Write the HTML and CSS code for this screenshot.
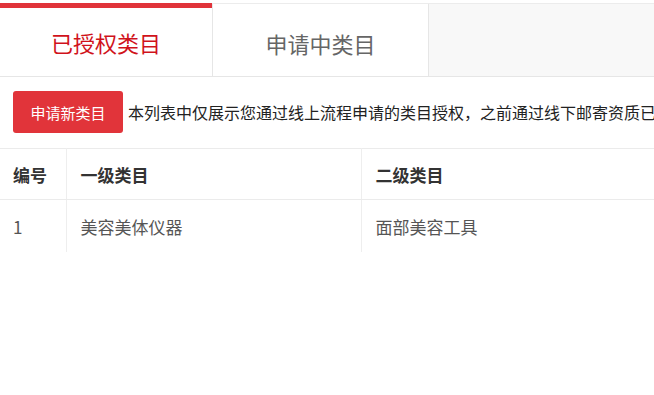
FILE: index.html
```html
<!DOCTYPE html>
<html lang="zh">
<head>
<meta charset="utf-8">
<link rel="stylesheet" href="styles.css">
</head>
<body>
<div class="page">
  <div class="tabs">
    <div class="tab tab-active">已授权类目</div>
    <div class="tab tab-normal">申请中类目</div>
  </div>
  <div class="toolbar">
    <button class="btn-apply">申请新类目</button>
    <span class="note">本列表中仅展示您通过线上流程申请的类目授权，之前通过线下邮寄资质已经获得授权的类目不在此列表中展示</span>
  </div>
  <table class="grid">
    <colgroup>
      <col class="c1"><col class="c2"><col class="c3">
    </colgroup>
    <thead>
      <tr><th>编号</th><th>一级类目</th><th>二级类目</th></tr>
    </thead>
    <tbody>
      <tr><td>1</td><td>美容美体仪器</td><td>面部美容工具</td></tr>
    </tbody>
  </table>
</div>
</body>
</html>
```

FILE: styles.css
```css
html, body {
  margin: 0;
  padding: 0;
  background: #fff;
}
body {
  font-family: "Noto Sans CJK SC", "Noto Sans", sans-serif;
  overflow: hidden;
}
.page {
  width: 654px;
  padding-top: 3px;
}
.tabs {
  display: flex;
  height: 74px;
  box-sizing: border-box;
  border-top: 1px solid #ececec;
  border-bottom: 1px solid #e6e6e6;
  background: #f8f8f8;
}
.tab {
  display: flex;
  align-items: center;
  justify-content: center;
  font-size: 22px;
  background: #fff;
  box-sizing: border-box;
}
.tab-active {
  width: 212px;
  margin-top: -1px;
  border-top: 5px solid #e0333a;
  color: #d0121b;
  padding-bottom: 1px;
}
.tab-normal {
  width: 217px;
  border-left: 1px solid #e6e6e6;
  border-right: 1px solid #e6e6e6;
  color: #666;
  padding-top: 6px;
}
.toolbar {
  display: flex;
  align-items: center;
  padding: 14px 0 15px 13px;
  white-space: nowrap;
  overflow: hidden;
}
.btn-apply {
  flex: none;
  width: 110px;
  height: 42px;
  border: none;
  border-radius: 3px;
  background: #e1343a;
  color: #fff;
  font-family: inherit;
  font-size: 15px;
  padding: 0;
}
.note {
  margin-left: 5px;
  font-size: 16px;
  color: #222;
}
.grid {
  width: 654px;
  border-collapse: collapse;
  table-layout: fixed;
  border-top: 1px solid #ebebeb;
}
.c1 { width: 66px; }
.c2 { width: 295px; }
.grid th, .grid td {
  text-align: left;
  padding: 0 0 0 14px;
  border-right: 1px solid #eeeeee;
  font-size: 17px;
}
.grid th:last-child, .grid td:last-child {
  border-right: none;
}
.grid th:first-child, .grid td:first-child {
  padding-left: 13px;
}
.grid th {
  height: 50px;
  font-weight: bold;
  color: #333;
  border-bottom: 1px solid #ebebeb;
}
.grid td {
  height: 52px;
  color: #555;
}
```
